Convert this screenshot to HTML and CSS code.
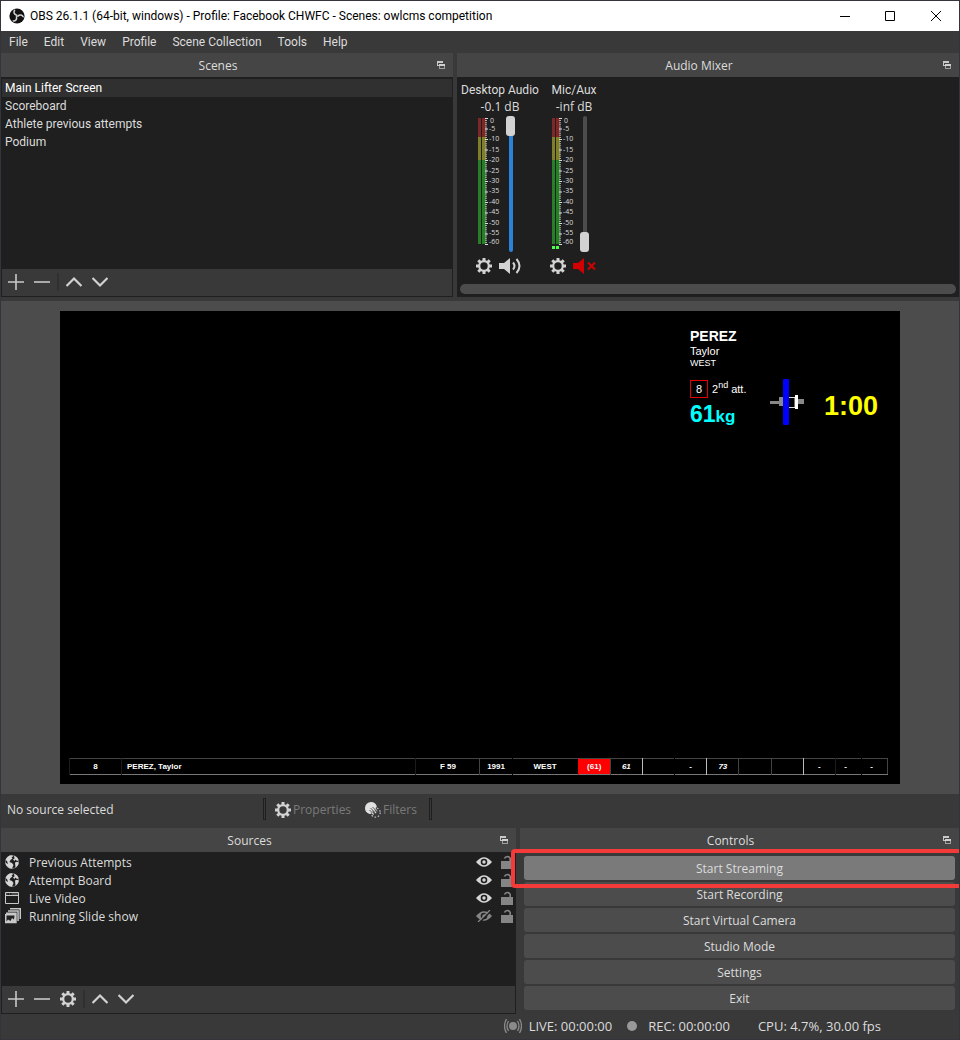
FILE: index.html
```html
<!DOCTYPE html>
<html lang="en">
<head>
<meta charset="utf-8">
<title>OBS 26.1.1</title>
<link rel="stylesheet" href="styles.css">
</head>
<body>
<svg class="defs" aria-hidden="true">
  <symbol id="i-float" viewBox="0 0 8 8"><path d="M0 0h6v2H1v2h1v1H0z" fill="#c8c8c8"/><path d="M2 3h6v5H2zM3 5v2h4V5z" fill="#a0a0a0" fill-rule="evenodd"/><path d="M2 3h6v2H2z" fill="#d0d0d0"/></symbol>
  <symbol id="i-plus" viewBox="0 0 16 16"><path d="M8 0v16M0 8h16" stroke="#c8c8c8" stroke-width="1.600"/></symbol>
  <symbol id="i-minus" viewBox="0 0 16 16"><path d="M0 8h16" stroke="#c8c8c8" stroke-width="1.600"/></symbol>
  <symbol id="i-up" viewBox="0 0 16 16"><path d="M.5 12L8 4.500l7.500 7.500" fill="none" stroke="#d2d2d2" stroke-width="2.200"/></symbol>
  <symbol id="i-down" viewBox="0 0 16 16"><path d="M.5 4L8 11.500 15.500 4" fill="none" stroke="#d2d2d2" stroke-width="2.200"/></symbol>
  <symbol id="i-gear" viewBox="0 0 16 16"><g fill="none" stroke="#d2d2d2"><circle cx="8" cy="8" r="4.800" stroke-width="2.200"/><path stroke-width="3" d="M8 0v3M8 13v3M0 8h3M13 8h3M2.300 2.300l2.200 2.200M11.500 11.500l2.200 2.200M2.300 13.700l2.200-2.200M11.500 4.500l2.200-2.200"/></g></symbol>
  <symbol id="i-speaker" viewBox="0 0 23 16"><path d="M0 5h5l6-5v16l-6-5H0z" fill="#d2d2d2"/><path d="M14 4.500q3 3.500 0 7M17.500 1q6 7 0 14" fill="none" stroke="#d2d2d2" stroke-width="2"/></symbol>
  <symbol id="i-muted" viewBox="0 0 23 16"><path d="M0 5h5l6-5v16l-6-5H0z" fill="#d20000"/><path d="M15 4.500l7 7M22 4.500l-7 7" stroke="#d20000" stroke-width="2"/></symbol>
  <symbol id="i-filters" viewBox="0 0 16 16"><circle cx="10.500" cy="10.500" r="4.700" fill="none" stroke="#b8b8b8" stroke-width="1.300" stroke-dasharray="1.600 1.700"/><path d="M6 0a6 6 0 0 1 5.800 4.500L11 6l-1-.5L12.500 9 12 9.500 9 7l2.500 4-.7.500L7 8l2 4.500-1 .3L5.500 10 6 12C2.500 12 0 9.500 0 6a6 6 0 0 1 6-6z" fill="#e0e0e0"/><path d="M5.500 6l4 4M4.500 8l3 3M7.500 5l4 4" stroke="#393939" stroke-width=".8"/></symbol>
  <symbol id="i-globe" viewBox="0 0 14 14"><circle cx="7" cy="7" r="6.600" fill="#1f1f1f" stroke="#888" stroke-width=".7"/><path d="M.6 5C1.500 2 4 .3 7 .3L8 1.500 6.500 2.500l1 1L5.500 5l-1 2 2.500 1 1.500 2L7 13.700C3.500 13.500.8 11 .3 7.500L3 9 2 6z" fill="#d6d6d6"/><path d="M9 .7c2.300.6 4 2.200 4.600 4.500L12 6 10.500 4.500 9.500 6 8 4.500l1.500-1zM10 7.500l2-.700 1.700.700c-.200 2.300-1.400 4.200-3.200 5.200z" fill="#d6d6d6"/></symbol>
  <symbol id="i-window" viewBox="0 0 14 12"><path d="M.5.5h13v11H.5zM0 3.500h14" fill="none" stroke="#c8c8c8"/><path d="M1 2h1.500M4 2h1M6.500 2H13" stroke="#777"/></symbol>
  <symbol id="i-slides" viewBox="0 0 16 16"><path d="M5 0h11v11h-1.500V1.500H5zM3 2.300h10.800V13h-1.500V3.800H3zM1 4.500h10.700v10.800H0V6h1z" fill="#c8c8c8"/><path d="M1.500 7.500h8l-.500 4L7 10l-1.500 3L3 11.500l-1.500 2z" fill="#222"/></symbol>
  <symbol id="i-eye" viewBox="0 0 16 10"><path d="M0 5Q8-4.500 16 5 8 14.500 0 5z" fill="#d6d6d6"/><circle cx="8" cy="5" r="3.300" fill="#1f1f1f"/><circle cx="8" cy="5" r="1.700" fill="#d6d6d6"/></symbol>
  <symbol id="i-hidden" viewBox="0 0 16 12"><path d="M0 6Q8-3.500 16 6 8 15.500 0 6z" fill="#858585"/><circle cx="8" cy="6" r="3.300" fill="#1f1f1f"/><circle cx="8" cy="6" r="1.700" fill="#858585"/><path d="M3 13L15 1" stroke="#1f1f1f" stroke-width="1.500"/><path d="M2 12L14 0" stroke="#858585" stroke-width="1.300"/></symbol>
  <symbol id="i-unlock" viewBox="0 0 12 14"><path d="M0 6h12v8H0z" fill="#858585"/><path d="M3.500 3.500a3 3 0 0 1 5.700 0V6" fill="none" stroke="#858585" stroke-width="1.600"/></symbol>
</svg>
<div class="window">
  <header class="titlebar">
    <svg class="logo" viewBox="0 0 16 16" aria-hidden="true"><circle cx="8" cy="8" r="7.600" fill="#111"/><g fill="none" stroke="#d4d4d4" stroke-width="1.500" stroke-linecap="round"><path d="M7.700 7.200C5 6.500 4.300 4 5.600 2.300"/><path d="M7.700 7.200C5 6.500 4.300 4 5.600 2.300" transform="rotate(120 8 8)"/><path d="M7.700 7.200C5 6.500 4.300 4 5.600 2.300" transform="rotate(240 8 8)"/></g></svg>
    <h1 class="title">OBS 26.1.1 (64-bit, windows) - Profile: Facebook CHWFC - Scenes: owlcms competition</h1>
    <button class="wbtn" aria-label="Minimize"><svg viewBox="0 0 10 10"><path d="M0 5.500h10" stroke="#000"/></svg></button>
    <button class="wbtn" aria-label="Maximize"><svg viewBox="0 0 10 10"><path d="M.5.5h9v9h-9z" fill="none" stroke="#000"/></svg></button>
    <button class="wbtn" aria-label="Close"><svg viewBox="0 0 10 10"><path d="M0 0l10 10M10 0L0 10" stroke="#000"/></svg></button>
  </header>
  <nav class="menu">
    <button>File</button><button>Edit</button><button>View</button><button>Profile</button><button>Scene Collection</button><button>Tools</button><button>Help</button>
  </nav>

  <div class="docks docks-top">
    <section class="dock">
      <div class="dock-head"><h2>Scenes</h2><button class="float" aria-label="Float Scenes"><svg><use href="#i-float"/></svg></button></div>
      <ul class="list scenes">
        <li class="row selected">Main Lifter Screen</li>
        <li class="row">Scoreboard</li>
        <li class="row">Athlete previous attempts</li>
        <li class="row">Podium</li>
      </ul>
      <div class="tools">
        <button aria-label="Add scene"><svg><use href="#i-plus"/></svg></button>
        <button aria-label="Remove scene"><svg><use href="#i-minus"/></svg></button>
        <span class="sep"></span>
        <button aria-label="Move scene up"><svg><use href="#i-up"/></svg></button>
        <button aria-label="Move scene down"><svg><use href="#i-down"/></svg></button>
      </div>
    </section>
    <section class="dock">
      <div class="dock-head"><h2>Audio Mixer</h2><button class="float" aria-label="Float Audio Mixer"><svg><use href="#i-float"/></svg></button></div>
      <div class="mixer">
        <div class="channels">
          <div class="channel">
            <label for="vol-desktop">Desktop Audio</label>
            <span class="level">-0.1 dB</span>
            <div class="meter-row">
              <svg class="meter" viewBox="0 0 24 136">
                <path d="M0 2h3v19H0zM4 2h4v19H4z" fill="#7f2626"/><path d="M0 21h3v23H0zM4 21h4v23H4z" fill="#7f7f26"/><path d="M0 44h3v84H0zM4 44h4v84H4z" fill="#267f26"/>
                <path d="M8 2v127" stroke="#aaa" stroke-width="2" stroke-dasharray="1 1.100"/><path d="M8.500 2v127" stroke="#ddd" stroke-width="3" stroke-dasharray="1 9.500"/>
                <g class="scale"><text x="12" y="7">0</text><text x="11" y="15">-5</text><text x="11" y="25">-10</text><text x="11" y="36">-15</text><text x="11" y="46">-20</text><text x="11" y="57">-25</text><text x="11" y="67">-30</text><text x="11" y="77">-35</text><text x="11" y="88">-40</text><text x="11" y="98">-45</text><text x="11" y="109">-50</text><text x="11" y="119">-55</text><text x="11" y="128">-60</text></g>
              </svg>
              <input class="fader" id="vol-desktop" type="range" min="0" max="100" value="100">
            </div>
            <div class="ch-tools">
              <button aria-label="Desktop Audio settings"><svg class="ic16"><use href="#i-gear"/></svg></button>
              <button aria-label="Mute Desktop Audio"><svg class="spk"><use href="#i-speaker"/></svg></button>
            </div>
          </div>
          <div class="channel">
            <label for="vol-mic">Mic/Aux</label>
            <span class="level">-inf dB</span>
            <div class="meter-row">
              <svg class="meter" viewBox="0 0 24 136">
                <path d="M0 2h3v19H0zM4 2h4v19H4z" fill="#7f2626"/><path d="M0 21h3v23H0zM4 21h4v23H4z" fill="#7f7f26"/><path d="M0 44h3v84H0zM4 44h4v84H4z" fill="#267f26"/>
                <path d="M0 130h3v3H0zM4 130h3v3H4z" fill="#4cff4c"/>
                <path d="M8 2v127" stroke="#aaa" stroke-width="2" stroke-dasharray="1 1.100"/><path d="M8.500 2v127" stroke="#ddd" stroke-width="3" stroke-dasharray="1 9.500"/>
                <g class="scale"><text x="12" y="7">0</text><text x="11" y="15">-5</text><text x="11" y="25">-10</text><text x="11" y="36">-15</text><text x="11" y="46">-20</text><text x="11" y="57">-25</text><text x="11" y="67">-30</text><text x="11" y="77">-35</text><text x="11" y="88">-40</text><text x="11" y="98">-45</text><text x="11" y="109">-50</text><text x="11" y="119">-55</text><text x="11" y="128">-60</text></g>
              </svg>
              <input class="fader muted" id="vol-mic" type="range" min="0" max="100" value="0">
            </div>
            <div class="ch-tools">
              <button aria-label="Mic/Aux settings"><svg class="ic16"><use href="#i-gear"/></svg></button>
              <button aria-label="Unmute Mic/Aux"><svg class="spk"><use href="#i-muted"/></svg></button>
            </div>
          </div>
        </div>
        <div class="hscroll"></div>
      </div>
    </section>
  </div>

  <main class="preview">
    <div class="canvas">
      <div class="board">
        <div class="who">
          <strong class="last">PEREZ</strong>
          <span class="first">Taylor</span>
          <span class="team">WEST</span>
          <div class="attempt"><span class="start">8</span><span>2<sup>nd</sup> att.</span></div>
          <div class="weight">61<small>kg</small></div>
        </div>
        <svg class="barbell" viewBox="0 0 34 46"><path d="M0 22h9v-4h4v9H9v-2H0zM28 20h6v5h-6z" fill="#888"/><rect x="13" width="6" height="46" rx="1" fill="#00f"/><path d="M19 18.500h6v10h-6" fill="none" stroke="#ddd"/><path d="M25 16h3v14h-3z" fill="#fff"/></svg>
        <div class="clock">1:00</div>
      </div>
      <table class="results">
        <colgroup><col class="c-no"><col class="c-name"><col class="c-cat"><col><col class="c-team"><col><col><col><col><col><col><col><col><col class="c-tot"><col class="c-tot"></colgroup>
        <tbody><tr>
          <td>8</td><td class="name">PEREZ, Taylor</td><td>F 59</td><td class="mid">1991</td><td class="plain">WEST</td><td class="current">(61)</td><td class="mid req">61</td><td class="strong"></td><td class="plain">-</td><td class="strong req">73</td><td class="mid"></td><td class="mid"></td><td class="strong">-</td><td class="tot">-</td><td class="plain tot">-</td>
        </tr></tbody>
      </table>
    </div>
  </main>

  <div class="context">
    <span class="ctx-name">No source selected</span>
    <span class="bar"></span>
    <button disabled><svg class="ic16"><use href="#i-gear"/></svg>Properties</button>
    <button disabled><svg class="ic16"><use href="#i-filters"/></svg>Filters</button>
    <span class="bar"></span>
  </div>

  <div class="docks docks-bottom">
    <section class="dock">
      <div class="dock-head"><h2>Sources</h2><button class="float" aria-label="Float Sources"><svg><use href="#i-float"/></svg></button></div>
      <ul class="list sources">
        <li class="row"><svg class="globe"><use href="#i-globe"/></svg><span class="src">Previous Attempts</span><button aria-label="Hide Previous Attempts"><svg class="eye"><use href="#i-eye"/></svg></button><button aria-label="Lock Previous Attempts"><svg class="lock"><use href="#i-unlock"/></svg></button></li>
        <li class="row"><svg class="globe"><use href="#i-globe"/></svg><span class="src">Attempt Board</span><button aria-label="Hide Attempt Board"><svg class="eye"><use href="#i-eye"/></svg></button><button aria-label="Lock Attempt Board"><svg class="lock"><use href="#i-unlock"/></svg></button></li>
        <li class="row"><svg class="globe"><use href="#i-window"/></svg><span class="src">Live Video</span><button aria-label="Hide Live Video"><svg class="eye"><use href="#i-eye"/></svg></button><button aria-label="Lock Live Video"><svg class="lock"><use href="#i-unlock"/></svg></button></li>
        <li class="row"><svg class="slides"><use href="#i-slides"/></svg><span class="src">Running Slide show</span><button aria-label="Show Running Slide show"><svg class="eye"><use href="#i-hidden"/></svg></button><button aria-label="Lock Running Slide show"><svg class="lock"><use href="#i-unlock"/></svg></button></li>
      </ul>
      <div class="tools">
        <button aria-label="Add source"><svg><use href="#i-plus"/></svg></button>
        <button aria-label="Remove source"><svg><use href="#i-minus"/></svg></button>
        <button aria-label="Source properties"><svg><use href="#i-gear"/></svg></button>
        <span class="sep"></span>
        <button aria-label="Move source up"><svg><use href="#i-up"/></svg></button>
        <button aria-label="Move source down"><svg><use href="#i-down"/></svg></button>
      </div>
    </section>
    <section class="dock">
      <div class="dock-head"><h2>Controls</h2><button class="float" aria-label="Float Controls"><svg><use href="#i-float"/></svg></button></div>
      <div class="controls">
        <div class="callout"><button class="ctl hover">Start Streaming</button></div>
        <button class="ctl">Start Recording</button>
        <button class="ctl">Start Virtual Camera</button>
        <button class="ctl">Studio Mode</button>
        <button class="ctl">Settings</button>
        <button class="ctl">Exit</button>
      </div>
    </section>
  </div>

  <footer class="status">
    <span class="stat live"><svg class="cast" viewBox="0 0 18 14"><circle cx="9" cy="7" r="4" fill="#8a8a8a"/><path d="M4.500 2q-3 5 0 10M13.500 2q3 5 0 10M2.500 0q-4 7 0 14M15.500 0q4 7 0 14" fill="none" stroke="#8a8a8a" stroke-width="1.300"/></svg>LIVE: 00:00:00</span>
    <span class="stat rec"><span class="dot"></span>REC: 00:00:00</span>
    <span class="stat">CPU: 4.7%, 30.00 fps</span>
  </footer>
</div>
</body>
</html>
```
FILE: styles.css
```css
* { box-sizing: border-box; }
body { margin: 0; background: #2b2b32; color: #dcdcdc; font: 12px/18px "Open Sans", "Noto Sans", sans-serif; }
button { border: 0; padding: 0; background: none; color: inherit; font: inherit; }
svg { display: block; }
h1, h2 { margin: 0; font: inherit; }
.defs { position: absolute; width: 0; height: 0; }

.window { display: flex; flex-direction: column; min-height: 100vh; overflow: hidden; background: #393939; border: 1px solid #34343c; }

.titlebar { display: flex; align-items: center; height: 30px; padding-left: 8px; background: #fff; color: #000; }
.logo { width: 16px; height: 16px; margin-right: 5px; }
.title { flex: 1; white-space: nowrap; font-family: Roboto, sans-serif; }
.wbtn { display: grid; place-items: center; width: 45px; height: 30px; }
.wbtn svg { width: 10px; height: 10px; }
.titlebar .wbtn:last-child { width: 47px; }

.menu { display: flex; gap: 16px; height: 22px; padding-left: 8px; font-family: Roboto, sans-serif; }

.docks { display: grid; gap: 4px; }
.docks-top { grid-template-columns: 452fr 502fr; height: 244px; }
.docks-bottom { grid-template-columns: 515fr 439fr; height: 186px; }
.dock { display: flex; flex-direction: column; min-width: 0; }
.dock-head { display: flex; align-items: center; height: 24px; padding: 0 8px 0 0; background: #454545; }
.dock-head h2 { flex: 1; padding: 2px 2px 0 0; text-align: center; }
.float svg { width: 8px; height: 8px; }
.list { flex: 1; margin: 0; padding: 2px 1px 0; list-style: none; background: #1f1f1f; }
.row { height: 18px; padding-left: 3px; }
.scenes { font-family: Roboto, sans-serif; }
.selected { background: #303030; color: #fff; }
.tools { display: flex; align-items: center; gap: 10px; height: 28px; padding: 0 0 2px 6px; border: 1px solid #1f1f1f; border-top: 0; }
.tools svg { width: 16px; height: 16px; }
.sep { width: 2px; height: 18px; margin: 0 -3px 0 -3px; background: #303030; }

.mixer { display: flex; flex: 1; flex-direction: column; justify-content: space-between; padding: 4px 3px 3px; background: #1f1f1f; }
.channels { display: flex; padding-left: 3px; }
.channel { display: flex; flex-direction: column; align-items: center; width: 74px; white-space: nowrap; line-height: 17px; }
.channel label { height: 17px; line-height: 19px; font-family: Roboto, sans-serif; }
.meter-row { display: flex; gap: 4px; padding: 1px 6px 0 0; }
.meter { width: 24px; height: 136px; }
.scale { fill: #ddd; font: 7px "Open Sans", sans-serif; }
.fader { appearance: none; writing-mode: vertical-lr; direction: rtl; width: 10px; height: 136px; margin: 0; background: none; }
.fader::-webkit-slider-runnable-track { width: 4px; height: 136px; border-radius: 2px; background: #2a82da; }
.fader.muted::-webkit-slider-runnable-track { background: #4c4c4c; }
.fader::-webkit-slider-thumb { appearance: none; width: 9px; height: 20px; margin-left: -3px; border: 0; border-radius: 3px; background: #d2d2d2; }
.ch-tools { display: flex; gap: 7px; padding: 6px 2px 0 0; }
.ic16 { width: 16px; height: 16px; }
.spk { width: 23px; height: 16px; }
.hscroll { height: 10px; border-radius: 5px; background: #4c4c4c; }

.preview { margin-top: 4px; padding: 10px 59px; background: #4c4c4c; }
.canvas { display: flex; flex-direction: column; justify-content: space-between; aspect-ratio: 840 / 473; padding: 17px 12px 9px 9px; background: #000; color: #fff; font-family: "Liberation Sans", Arial, sans-serif; }
.board { display: flex; align-items: flex-end; justify-content: flex-end; padding-right: 10px; }
.who { display: flex; flex-direction: column; width: 80px; line-height: 12px; }
.last { font-size: 14px; line-height: 16px; }
.first { font-size: 11px; line-height: 14px; }
.team { font-size: 9px; line-height: 11px; }
.attempt { display: flex; align-items: center; gap: 4px; height: 18px; margin-top: 11px; font-size: 11px; line-height: 16px; white-space: nowrap; }
.attempt sup { font-size: 9px; line-height: 0; }
.start { width: 18px; height: 18px; border: 1px solid #e00000; text-align: center; line-height: 16px; }
.weight { color: #0ff; font-weight: bold; font-size: 23px; line-height: 32px; }
.weight small { font-size: 17px; }
.barbell { width: 34px; height: 46px; margin-bottom: 8px; }
.clock { width: 74px; margin-bottom: 12px; color: #ff0; font-weight: bold; font-size: 27px; line-height: 30px; text-align: right; }

.results { width: 100%; table-layout: fixed; border-collapse: collapse; border: 1px solid #444; border-bottom-color: #777; font-weight: bold; font-size: 8px; line-height: 15px; }
.results td { padding: 0; border-left: 1px solid #1c1c1c; text-align: center; }
.results td.name { padding-left: 5px; text-align: left; }
.results td.mid { border-left-color: #444; }
.results td.plain { border-left-color: #000; }
.results td.strong { border-left-color: #bbb; }
.results td.current { background: #f00; border-left-color: #f00; }
.results td.tot { padding-right: 6px; }
.req { font-style: italic; }
.c-no { width: 52px; }
.c-name { width: 36%; }
.c-cat { width: 64px; }
.c-team { width: 66px; }
.c-tot { width: 26px; }

.context { display: flex; align-items: center; height: 34px; padding: 0 6px 4px; }
.ctx-name { width: 256px; padding-top: 2px; }
.bar { width: 3px; height: 22px; border: 1px solid #1f1f1f; }
.context button { display: flex; align-items: center; gap: 2px; margin-left: 9px; padding-top: 1px; color: #7a7a7a; }
.context button + button { margin-left: 14px; }
.context button + .bar { margin-left: 12px; }

.sources .row { display: flex; align-items: center; padding: 0 2px 0 3px; }
.sources { padding-top: 1px; }
.globe { width: 14px; height: 14px; }
.slides { width: 16px; height: 16px; margin-right: -2px; }
.src { flex: 1; margin-left: 10px; padding-top: 2px; }
.eye { width: 16px; height: 12px; }
.lock { width: 12px; height: 14px; margin-left: 9px; }

.controls { display: flex; flex-direction: column; gap: 2px; padding: 4px 4px 0 4px; }
.ctl { width: 100%; height: 24px; padding-top: 2px; border-radius: 3px; background: #4c4c4c; text-align: center; }
.ctl.hover { background: #7a7a7a; }
.callout { position: relative; height: 24px; }
.callout::after { content: ""; position: absolute; z-index: 1; inset: -7px -9px -8px -13px; border: 4px solid #f43b39; border-radius: 4px; pointer-events: none; }

.status { display: flex; justify-content: flex-end; align-items: center; gap: 28px; height: 24px; padding-right: 78px; font-size: 13px; }
.stat { display: flex; align-items: center; }
.live { margin-right: -13px; }
.cast { width: 18px; height: 14px; margin-right: 7px; }
.dot { width: 10px; height: 10px; margin-right: 11px; border-radius: 50%; background: #999; }
```
